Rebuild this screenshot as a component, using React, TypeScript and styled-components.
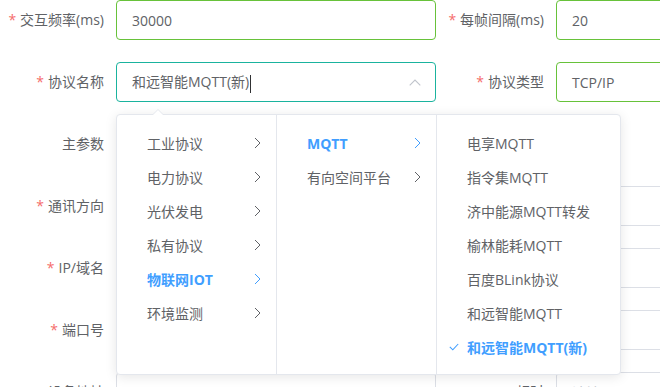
import React from "react";
import styled, { createGlobalStyle, css } from "styled-components";

const Global = createGlobalStyle`
  html, body { margin: 0; padding: 0; overflow: hidden; background: #fff; }
  body { font-family: "Open Sans", "Noto Sans CJK SC", sans-serif; font-size: 14px; color: #606266; }
`;

const Form = styled.div`
  position: relative;
  width: 660px;
  height: 387px;
  overflow: hidden;
`;

const Row = styled.div`
  display: flex;
  gap: 4px;
  height: 40px;
  margin-bottom: 22px;
`;

const Item = styled.div`
  display: flex;
  flex: 0 0 436px;
`;

const Label = styled.div<{ $required?: boolean }>`
  flex: 0 0 116px;
  box-sizing: border-box;
  padding-right: 12px;
  text-align: right;
  line-height: 40px;
  font-size: 14px;
  color: #606266;
  white-space: nowrap;
  ${(p) =>
    p.$required &&
    css`
      &::before {
        content: "*";
        color: #f56c6c;
        margin-right: 4px;
      }
    `}
`;

type Tone = "success" | "focus" | "plain";

const toneColor: Record<Tone, string> = {
  success: "#67c23a",
  focus: "#1ab39e",
  plain: "#dcdfe6",
};

const Field = styled.div<{ $tone: Tone; $muted?: boolean }>`
  flex: 0 0 320px;
  box-sizing: border-box;
  height: 40px;
  border: 1px solid ${(p) => toneColor[p.$tone]};
  border-radius: 4px;
  padding: 0 15px;
  display: flex;
  align-items: center;
  font-size: 14px;
  color: ${(p) => (p.$muted ? "#c0c4cc" : "#606266")};
  background: #fff;
  white-space: nowrap;
`;

const SelectField = styled(Field)`
  justify-content: space-between;
  padding-right: 8px;
`;

const Caret = styled.span`
  display: inline-block;
  width: 1px;
  height: 18px;
  background: #303133;
  margin-left: 1px;
  vertical-align: middle;
`;

const Popper = styled.div`
  position: absolute;
  left: 116px;
  top: 114px;
  display: flex;
  background: #fff;
  border: 1px solid #e4e7ed;
  border-radius: 4px;
  box-shadow: 0 2px 12px 0 rgba(0, 0, 0, 0.1);
  &::before,
  &::after {
    content: "";
    position: absolute;
    left: 35px;
    width: 0;
    height: 0;
    border: 6px solid transparent;
  }
  &::before {
    top: -12px;
    border-bottom-color: #e4e7ed;
  }
  &::after {
    top: -11px;
    border-bottom-color: #fff;
  }
`;

const Menu = styled.ul<{ $width: number; $last?: boolean }>`
  list-style: none;
  margin: 0;
  box-sizing: border-box;
  width: ${(p) => p.$width}px;
  height: 259px;
  padding: 11px 0 0;
  border-right: ${(p) => (p.$last ? "none" : "1px solid #e4e7ed")};
`;

const Node = styled.li<{ $active?: boolean }>`
  position: relative;
  height: 34px;
  display: flex;
  align-items: center;
  padding: 0 30px 0 20px;
  font-size: 14px;
  color: ${(p) => (p.$active ? "#409eff" : "#606266")};
  font-weight: ${(p) => (p.$active ? 700 : 400)};
  white-space: nowrap;
`;

const NodeLabel = styled.span`
  padding: 0 10px;
`;

const Postfix = styled.svg`
  position: absolute;
  right: 15px;
  top: 11px;
`;

const Prefix = styled.svg`
  position: absolute;
  left: 12px;
  top: 13px;
`;

const Chevron = () => (
  <Postfix width="7" height="12" viewBox="0 0 7 12">
    <path d="M1 1 L6 6 L1 11" fill="none" stroke="currentColor" strokeWidth="1" />
  </Postfix>
);

const Check = () => (
  <Prefix width="10" height="8" viewBox="0 0 10 8">
    <path d="M0.8 3.8 L3.8 6.8 L9.2 1" fill="none" stroke="#409eff" strokeWidth="1.1" />
  </Prefix>
);

const ArrowUp = () => (
  <svg width="12" height="7" viewBox="0 0 12 7" style={{ marginRight: 6 }}>
    <path d="M0.7 6.3 L6 1 L11.3 6.3" fill="none" stroke="#c0c4cc" strokeWidth="1.1" />
  </svg>
);

const col1 = ["工业协议", "电力协议", "光伏发电", "私有协议", "物联网IOT", "环境监测"];
const col2 = ["MQTT", "有向空间平台"];
const col3 = [
  "电享MQTT",
  "指令集MQTT",
  "济中能源MQTT转发",
  "榆林能耗MQTT",
  "百度BLink协议",
  "和远智能MQTT",
  "和远智能MQTT(新)",
];

export default function App() {
  return (
    <>
      <Global />
      <Form>
        <Row>
          <Item>
            <Label $required>交互频率(ms)</Label>
            <Field $tone="success">30000</Field>
          </Item>
          <Item>
            <Label $required>每帧间隔(ms)</Label>
            <Field $tone="success">20</Field>
          </Item>
        </Row>
        <Row>
          <Item>
            <Label $required>协议名称</Label>
            <SelectField $tone="focus">
              <span>
                和远智能MQTT(新)
                <Caret />
              </span>
              <ArrowUp />
            </SelectField>
          </Item>
          <Item>
            <Label $required>协议类型</Label>
            <Field $tone="success">TCP/IP</Field>
          </Item>
        </Row>
        <Row>
          <Item>
            <Label>主参数</Label>
          </Item>
        </Row>
        <Row>
          <Item>
            <Label $required>通讯方向</Label>
            <Field $tone="plain" />
          </Item>
          <Item>
            <Label />
            <Field $tone="plain" />
          </Item>
        </Row>
        <Row>
          <Item>
            <Label $required>IP/域名</Label>
            <Field $tone="plain" />
          </Item>
          <Item>
            <Label />
            <Field $tone="plain" />
          </Item>
        </Row>
        <Row>
          <Item>
            <Label $required>端口号</Label>
            <Field $tone="plain" />
          </Item>
          <Item>
            <Label />
            <Field $tone="plain" />
          </Item>
        </Row>
        <Row>
          <Item>
            <Label>设备地址</Label>
            <Field $tone="plain">0000</Field>
          </Item>
          <Item>
            <Label>超时</Label>
            <Field $tone="plain" $muted>
              请输入
            </Field>
          </Item>
        </Row>

        <Popper>
          <Menu $width={160}>
            {col1.map((t) => (
              <Node key={t} $active={t === "物联网IOT"}>
                <NodeLabel>{t}</NodeLabel>
                <Chevron />
              </Node>
            ))}
          </Menu>
          <Menu $width={160}>
            {col2.map((t) => (
              <Node key={t} $active={t === "MQTT"}>
                <NodeLabel>{t}</NodeLabel>
                <Chevron />
              </Node>
            ))}
          </Menu>
          <Menu $width={183} $last>
            {col3.map((t) => (
              <Node key={t} $active={t === "和远智能MQTT(新)"}>
                {t === "和远智能MQTT(新)" && <Check />}
                <NodeLabel>{t}</NodeLabel>
              </Node>
            ))}
          </Menu>
        </Popper>
      </Form>
    </>
  );
}
